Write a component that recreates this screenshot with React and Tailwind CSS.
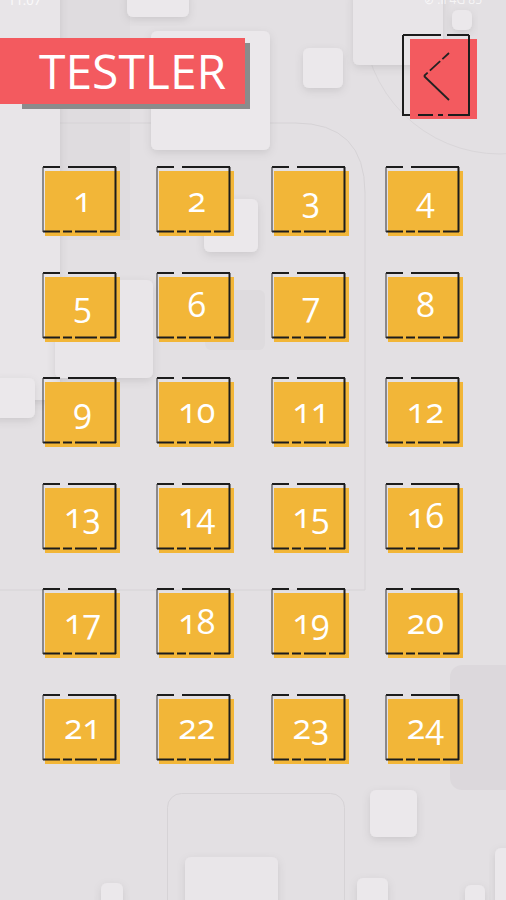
const levels = Array.from({ length: 24 }, (_, i) => i + 1);

// soft squares of the wallpaper: [x, y, w, h, fill]
const blocks = [
  [-10, -20, 70, 420, "#e8e5e8"],
  [127, -10, 62, 27, "#ebe8eb"],
  [151, 31, 119, 119, "#ebe8eb"],
  [303, 48, 40, 40, "#ebe8eb"],
  [353, -10, 90, 75, "#e8e5e8"],
  [452, 10, 20, 20, "#ebe8eb"],
  [204, 199, 54, 53, "#ebe8eb"],
  [55, 280, 98, 98, "#e9e6e9"],
  [-10, 378, 45, 40, "#ebe8eb"],
  [370, 790, 47, 47, "#ebe8eb"],
  [185, 857, 93, 60, "#e9e6e9"],
  [357, 878, 31, 30, "#ebe8eb"],
  [101, 883, 22, 30, "#ebe8eb"],
  [465, 885, 20, 30, "#ebe8eb"],
  [495, 848, 20, 60, "#ebe8eb"],
];

const Backdrop = () => (
  <svg className="absolute inset-0 pointer-events-none" width="506" height="900" viewBox="0 0 506 900" fill="none">
    <defs>
      <filter id="soft" x="-30%" y="-30%" width="160%" height="160%">
        <feDropShadow dx="0" dy="3" stdDeviation="4" floodColor="#000" floodOpacity="0.1" />
      </filter>
    </defs>
    <rect x="60" y="-10" width="70" height="250" fill="#dfdcdf" />
    <rect x="205" y="290" width="60" height="60" rx="6" fill="#dedbde" />
    <rect x="450" y="665" width="80" height="125" rx="12" fill="#dcd8dc" />
    <circle cx="500" cy="17" r="137" stroke="#d9d6d9" />
    <path d="M-60 123H295Q365 123 365 193V590H-60" stroke="#d6d3d6" />
    <rect x="167.5" y="793.5" width="177" height="140" rx="14" stroke="#d6d3d6" />
    {blocks.map(([x, y, w, h, c], i) => (
      <rect key={i} x={x} y={y} width={w} height={h} rx="6" fill={c} filter="url(#soft)" />
    ))}
  </svg>
);

const Tile = ({ n }) => (
  <div className="relative pl-[3px] pt-[5px]">
    <div className="w-[75px] h-[65px] bg-[#f2b638] flex items-center justify-center pb-[10px]">
      <span className="text-white text-[34px] leading-none oldstyle-nums">{n}</span>
    </div>
    <svg className="absolute inset-0" width="78" height="70" viewBox="0 0 78 70" fill="none">
      <g stroke="#1c1c1c" strokeWidth="2">
        <path d="M1 1H18M26 1H74" />
        <path d="M73.5 1V66" />
        <path d="M1 65.5H18M21 65.5H30M33 65.5H55M58 65.5H74" />
      </g>
      <path d="M1 1V66" stroke="#3a3a3a" strokeOpacity="0.7" strokeWidth="1.5" />
    </svg>
  </div>
);

const BackButton = () => (
  <div className="relative pl-[8px] pt-[5px]">
    <div className="w-[67px] h-[80px] bg-[#f35a5f]" />
    <svg className="absolute inset-0" width="75" height="85" viewBox="0 0 75 85" fill="none">
      <g stroke="#1c1c1c" strokeWidth="2">
        <path d="M1 1H39M45 1H67" />
        <path d="M1 1V82M67 1V82" />
        <path d="M1 81H8M16 81H31M36 81H41M46 81H67" />
      </g>
      <path d="M47 19L22 42" stroke="#222" strokeWidth="1.8" strokeDasharray="9 3 14 3 20" />
      <path d="M22 42L47 66" stroke="#222" strokeWidth="1.8" />
    </svg>
  </div>
);

export default function App() {
  return (
    <div className="relative w-full h-[900px] overflow-hidden bg-[#e3e0e3] font-['Open_Sans',sans-serif]">
      <Backdrop />
      <div className="relative flex flex-col">
        <div className="h-[8px] overflow-hidden flex justify-between px-[8px]">
          <span className="-mt-[9px] text-[13px] text-white/80">11:07</span>
          <span className="-mt-[9px] text-[12px] text-white/70 mr-[16px]">⊘ .ıl 4G 85</span>
        </div>
        <div className="mt-[26px] flex items-start justify-between">
          <div className="relative mt-[4px]">
            <div className="absolute left-[22px] top-[5px] w-[228px] h-[66px] bg-[#8b8b8b]" />
            <div className="relative w-[245px] h-[66px] bg-[#f35a5f] flex items-center pl-[39px]">
              <span className="text-white text-[48px] leading-none -mt-[1px]">TESTLER</span>
            </div>
          </div>
          <div className="mr-[29px]">
            <BackButton />
          </div>
        </div>
        <div className="mt-[47px] pl-[42px] grid grid-cols-[repeat(4,78px)] gap-x-[36.3px] gap-y-[35.6px]">
          {levels.map((n) => (
            <Tile key={n} n={n} />
          ))}
        </div>
      </div>
    </div>
  );
}
